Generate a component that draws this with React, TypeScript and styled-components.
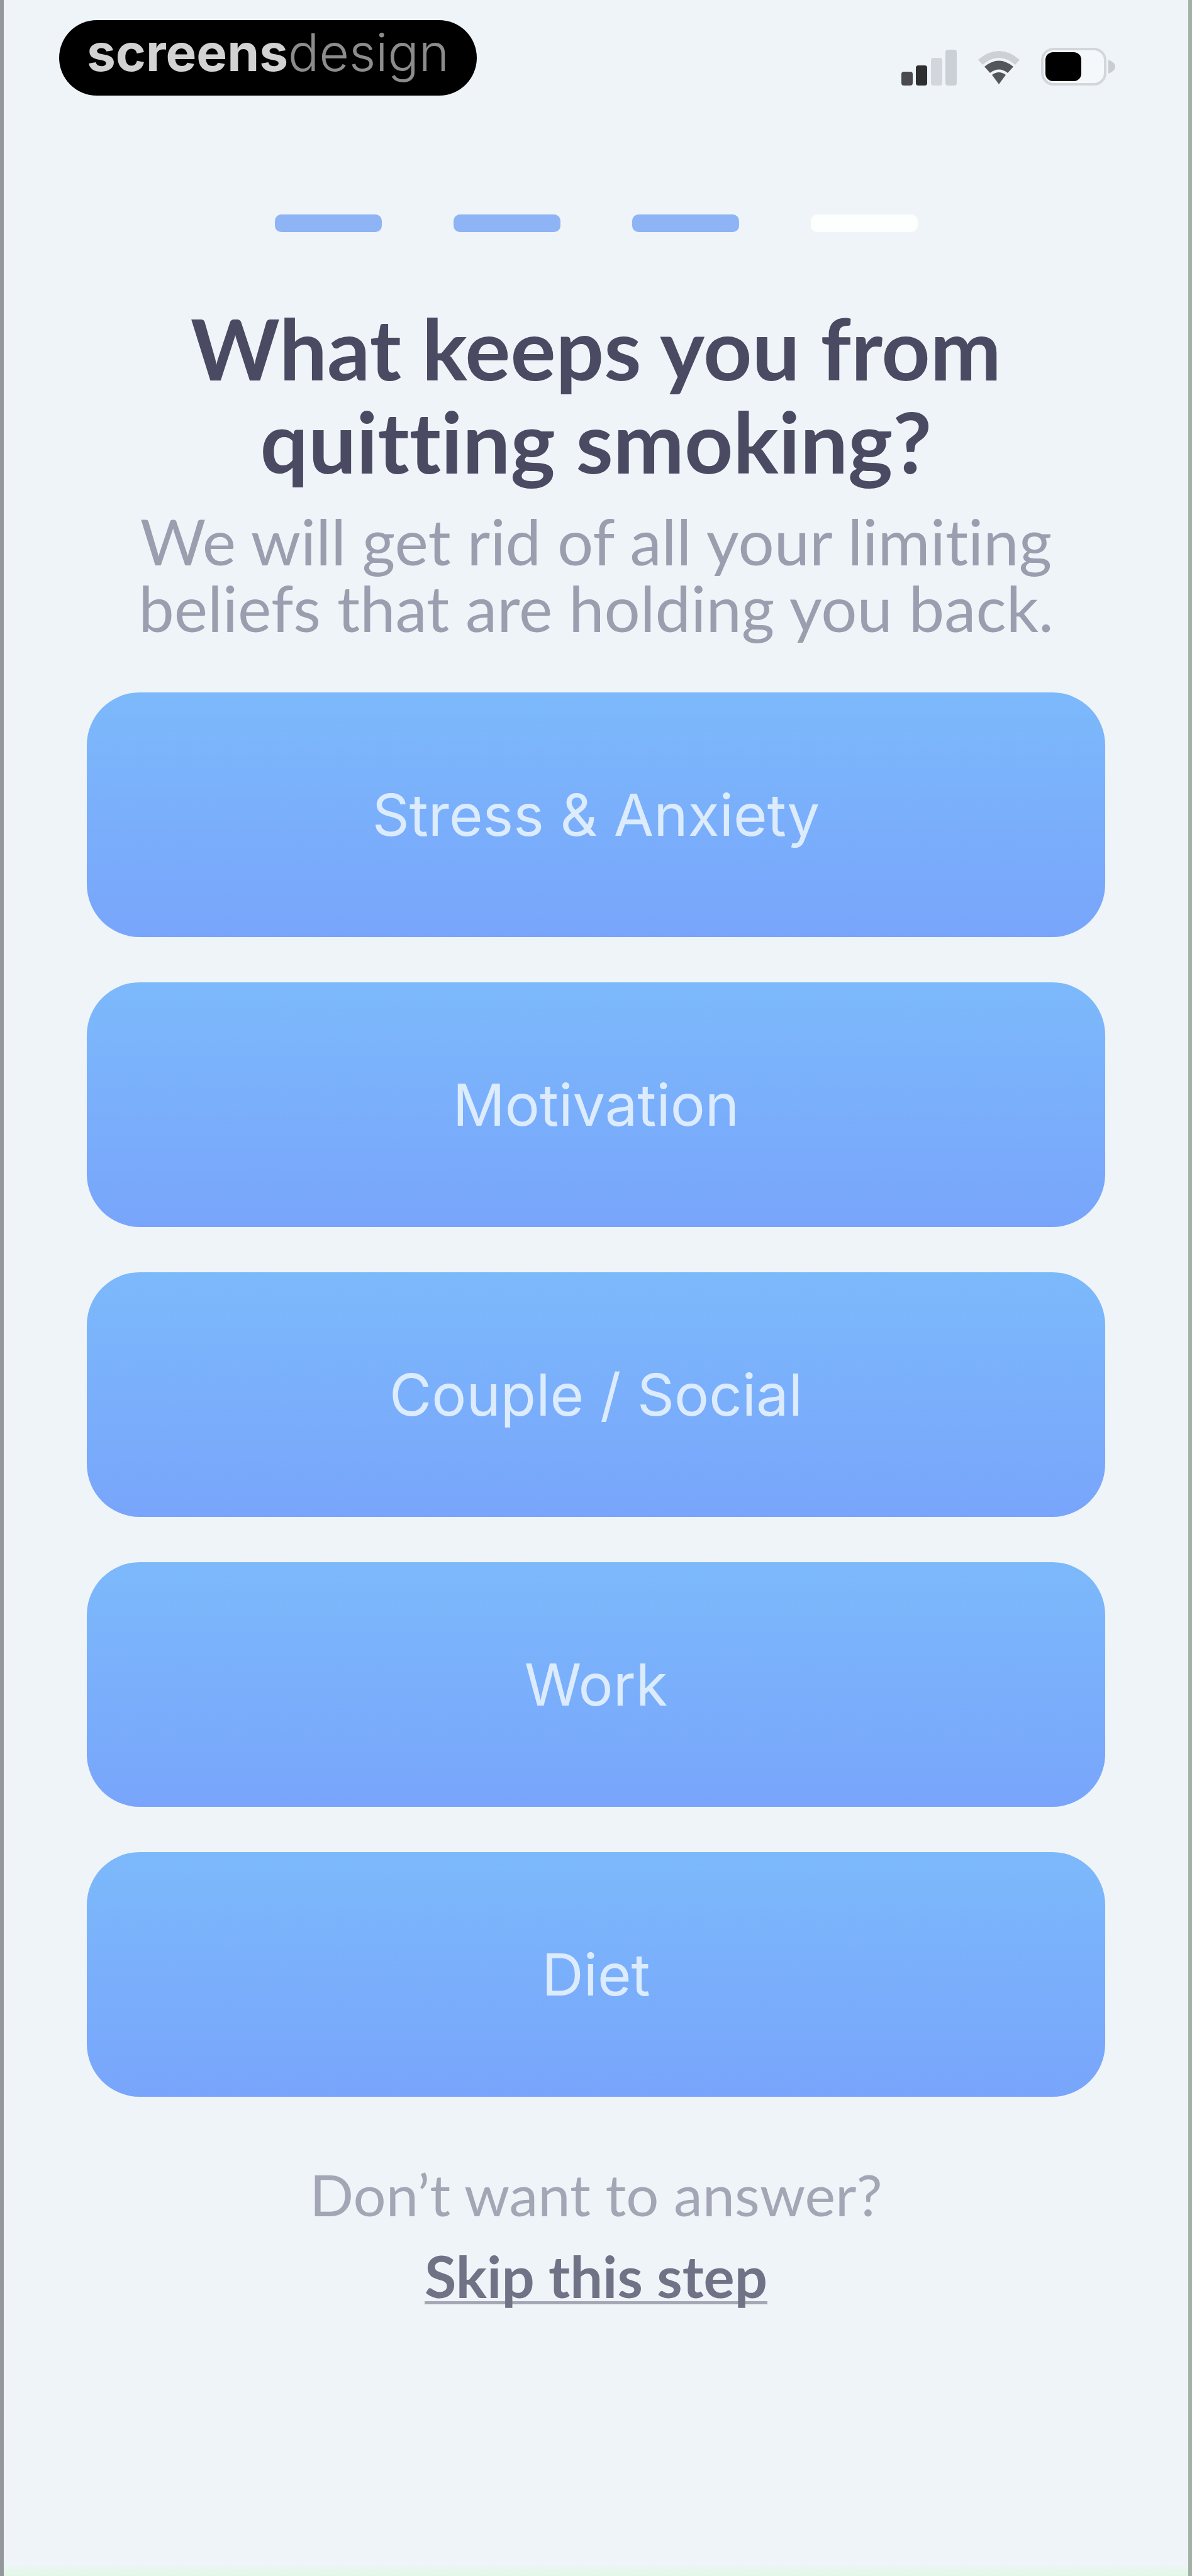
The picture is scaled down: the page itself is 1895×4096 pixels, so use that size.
import React from "react";
import styled, { createGlobalStyle } from "styled-components";

const GlobalStyle = createGlobalStyle`
  *, *::before, *::after { box-sizing: border-box; }
  html, body { margin: 0; background: #eff4f9; }
`;

const Screen = styled.div`
  min-height: 100vh;
  padding: 32px 132px 0;
  border-left: 6px solid #94989c;
  border-right: 6px solid #a3b0a6;
  background: linear-gradient(to top, #e2f8e6 0, #eff4f9 20px);
  color: #4a4b62;
  font-family: Lato, "Liberation Sans", sans-serif;
  font-variant-ligatures: none;
`;

const StatusBar = styled.header`
  display: flex;
  justify-content: space-between;
  align-items: flex-start;
  height: 309px;
  margin: 0 -18px 0 -44px;
`;

const Brand = styled.div`
  display: flex;
  justify-content: center;
  width: 664px;
  height: 120px;
  border-radius: 60px;
  background: #000;
  color: #d2d2d2;
  font-family: Inter, "Liberation Sans", sans-serif;
  font-size: 82px;
  font-weight: 700;
  line-height: 104px;
`;

const BrandLight = styled.span`
  color: #8c8c8c;
  font-weight: 300;
`;

const StatusIcons = styled.div`
  display: flex;
  gap: 34px;
  padding-top: 44px;
`;

const Progress = styled.div`
  display: flex;
  justify-content: center;
  gap: 114px;
`;

const Step = styled.span<{ $done: boolean }>`
  width: 170px;
  height: 28px;
  border-radius: 10px;
  background: ${(p) => (p.$done ? "#8fb4f6" : "#fdfefe")};
`;

const Intro = styled.section`
  padding-top: 110px;
  text-align: center;
`;

const Title = styled.h1`
  margin: 0;
  font-size: 135px;
  font-weight: 700;
  line-height: 148px;
`;

const Subtitle = styled.p`
  margin: 32px 0 0;
  color: #9b9eae;
  font-size: 101px;
  line-height: 106px;
`;

const Options = styled.div`
  display: flex;
  flex-direction: column;
  gap: 72px;
  padding-top: 82px;
`;

const Option = styled.button`
  height: 389px;
  padding: 0;
  border: 0;
  border-radius: 84px;
  background: linear-gradient(#7cb9fb, #78a5fb);
  color: #dcecfd;
  font-family: Inter, "Liberation Sans", sans-serif;
  font-size: 92px;
  cursor: pointer;
`;

const Footer = styled.footer`
  display: flex;
  flex-direction: column;
  align-items: center;
  padding-top: 90px;
  font-size: 92px;
  line-height: 130px;
`;

const Prompt = styled.p`
  margin: 0;
  color: #a3a6b4;
`;

const SkipLink = styled.a`
  color: #707286;
  font-weight: 700;
  text-decoration: underline;
  text-decoration-thickness: 5px;
  text-decoration-color: #a5a8b4;
  text-underline-offset: 5px;
  text-decoration-skip-ink: none;
`;

const SignalIcon = () => (
  <svg width="88" height="62" viewBox="0 0 88 62" aria-hidden="true">
    <rect x="0" y="38" width="18" height="22" rx="4" fill="#4a4a4e" />
    <rect x="23" y="28" width="18" height="32" rx="4" fill="#2e2e31" />
    <rect x="47" y="16" width="18" height="44" rx="4" fill="#d3d7dd" />
    <rect x="70" y="3" width="18" height="57" rx="4" fill="#cbcfd6" />
  </svg>
);

const WifiIcon = () => (
  <svg width="66" height="62" viewBox="0 0 66 62" aria-hidden="true">
    <path d="M0 19Q33 -9 66 19L59 27Q33 5 7 27Z" fill="#cdd1d6" />
    <path d="M10 30Q33 11 56 30L47 40Q33 29 19 40Z" fill="#55565b" />
    <path d="M22 43Q33 35 44 43L33 58Z" fill="#55565b" />
  </svg>
);

const BatteryIcon = () => (
  <svg width="120" height="62" viewBox="0 0 120 62" aria-hidden="true">
    <rect x="2" y="2" width="100" height="56" rx="18" fill="#f5f8fa" stroke="#d3d7db" strokeWidth="4" />
    <rect x="7" y="7" width="57" height="46" rx="12" fill="#000" />
    <path d="M107 19Q118 23 118 30Q118 37 107 41Z" fill="#c9cdd2" />
  </svg>
);

const steps = [true, true, true, false];
const options = ["Stress & Anxiety", "Motivation", "Couple / Social", "Work", "Diet"];

export default function App() {
  return (
    <>
      <GlobalStyle />
      <Screen>
        <StatusBar>
          <Brand>
            <span>screens</span>
            <BrandLight>design</BrandLight>
          </Brand>
          <StatusIcons>
            <SignalIcon />
            <WifiIcon />
            <BatteryIcon />
          </StatusIcons>
        </StatusBar>
        <main>
          <Progress role="img" aria-label="Step 3 of 4">
            {steps.map((done, i) => (
              <Step key={i} $done={done} />
            ))}
          </Progress>
          <Intro>
            <Title>
              What keeps you from
              <br />
              quitting smoking?
            </Title>
            <Subtitle>
              We will get rid of all your limiting
              <br />
              beliefs that are holding you back.
            </Subtitle>
          </Intro>
          <Options>
            {options.map((label) => (
              <Option key={label} type="button">
                {label}
              </Option>
            ))}
          </Options>
        </main>
        <Footer>
          <Prompt>Don’t want to answer?</Prompt>
          <SkipLink href="#skip">Skip this step</SkipLink>
        </Footer>
      </Screen>
    </>
  );
}
